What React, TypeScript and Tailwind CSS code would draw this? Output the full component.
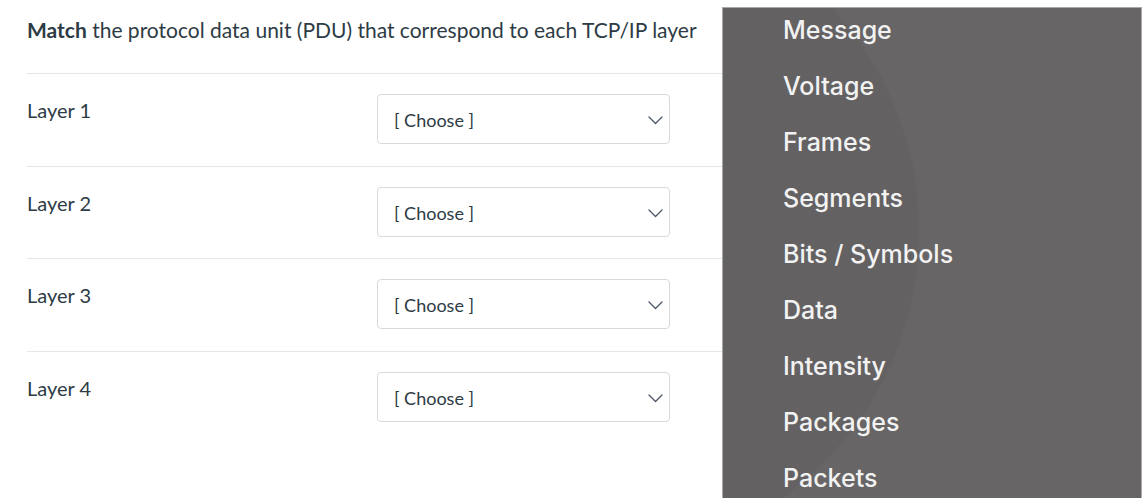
const layers = ["Layer 1", "Layer 2", "Layer 3", "Layer 4"];
const options = ["Message", "Voltage", "Frames", "Segments", "Bits / Symbols", "Data", "Intensity", "Packages", "Packets"];

function Chevron() {
  return (
    <svg width="15" height="9" viewBox="0 0 15 9" fill="none">
      <path d="M1 1l6.5 6.5L14 1" stroke="#4b5563" strokeWidth="1.3" strokeLinecap="round" strokeLinejoin="round" />
    </svg>
  );
}

export default function App() {
  return (
    <div className="relative w-[1144px] h-[498px] bg-white overflow-hidden text-[#2d3b45]" style={{ fontFamily: "Lato, 'Noto Sans', sans-serif" }}>
      <div className="pl-[27px] w-[760px]">
        <p className="pt-[16px] text-[21px] leading-7 h-[73px]">
          <span className="font-bold">Match</span> the protocol data unit (PDU) that correspond to each TCP/IP layer
        </p>
        {layers.map((layer) => (
          <div key={layer} className="flex border-t border-[#e5e7e9] h-[92.5px]">
            <div className="w-[350px] pt-[24px] text-[20px] leading-6">{layer}</div>
            <div className="pt-[20px]">
              <div className="w-[293px] h-[50px] flex items-center justify-between pl-[16px] pr-[6px] border border-[#d7dadd] rounded-[4px] text-[18px] pt-[3px]">
                <span>[ Choose ]</span>
                <Chevron />
              </div>
            </div>
          </div>
        ))}
      </div>

      {/* open select menu */}
      <div
        className="absolute left-[722px] top-[7px] w-[420px] h-[500px] border border-[#a9a8a8] bg-[#676566] pl-[60px] pt-[6px]"
        style={{ fontFamily: "Inter, 'Noto Sans', sans-serif" }}
      >
        <div className="absolute inset-0 bg-[radial-gradient(circle_330px_at_-132px_223px,rgba(0,0,0,0.04)_99%,transparent_100%)] pointer-events-none" />
        <ul className="relative">
          {options.map((o) => (
            <li key={o} className="h-[56px] leading-[32px] text-[25px] font-medium text-[#f2f2f2]">
              {o}
            </li>
          ))}
        </ul>
      </div>
    </div>
  );
}
